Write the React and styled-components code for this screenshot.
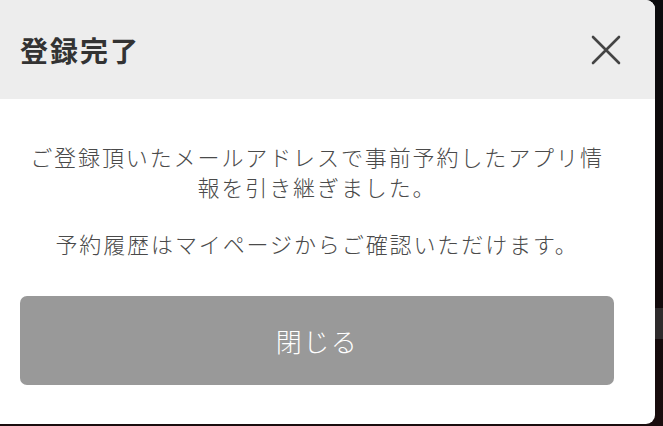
import React from 'react'
import styled, { createGlobalStyle } from 'styled-components'

const GlobalStyle = createGlobalStyle`
  html, body {
    margin: 0;
    padding: 0;
    background: #0d0b0c;
    font-family: "Noto Sans CJK JP", "Noto Sans", sans-serif;
  }
`

const Screen = styled.div`
  display: flex;
  width: 663px;
  height: 426px;
  overflow: hidden;
  background: linear-gradient(180deg, #0b0b0d 0%, #120a0b 70%, #1a0d0e 100%);
`

const Modal = styled.div`
  display: flex;
  flex-direction: column;
  width: 655px;
  height: 424px;
  background: #fff;
  border-radius: 0 9px 9px 0;
  overflow: hidden;
`

const Header = styled.div`
  display: flex;
  align-items: center;
  justify-content: space-between;
  height: 99px;
  padding: 0 34px 0 20px;
  background: #ededed;
`

const Title = styled.h1`
  margin: 0;
  font-size: 28px;
  font-weight: 700;
  letter-spacing: 2px;
  color: #333;
`

const CloseButton = styled.button`
  display: flex;
  padding: 0;
  border: 0;
  background: none;
  cursor: pointer;
`

const Body = styled.div`
  display: flex;
  flex-direction: column;
  align-items: center;
  padding: 42px 41px 0 20px;
`

const Message = styled.p`
  margin: 0 0 ${({ gap }) => gap}px;
  font-size: 22px;
  font-weight: 300;
  line-height: 30px;
  letter-spacing: 1.9px;
  text-align: center;
  color: #4a4a4a;
`

const CloseAction = styled.button`
  align-self: stretch;
  height: 89px;
  margin-top: 8px;
  border: 0;
  border-radius: 7px;
  background: #999;
  font-family: inherit;
  font-size: 26px;
  font-weight: 300;
  letter-spacing: 1.5px;
  color: #fff;
  cursor: pointer;
`

const Edge = styled.div`
  flex: 1;
  display: flex;
  flex-direction: column;
  padding-top: 308px;
`

const EdgeBar = styled.div`
  height: 31px;
  background: #2e2b2c;
`

function CloseIcon() {
  return (
    <svg width="30" height="30" viewBox="0 0 30 30">
      <path d="M2 2 L28 28 M28 2 L2 28" stroke="#444" strokeWidth="2.6" strokeLinecap="round" />
    </svg>
  )
}

function App() {
  return (
    <Screen>
      <GlobalStyle />
      <Modal>
        <Header>
          <Title>登録完了</Title>
          <CloseButton aria-label="閉じる">
            <CloseIcon />
          </CloseButton>
        </Header>
        <Body>
          <Message gap={27}>
            ご登録頂いたメールアドレスで事前予約したアプリ情
            <br />
            報を引き継ぎました。
          </Message>
          <Message gap={30}>予約履歴はマイページからご確認いただけます。</Message>
          <CloseAction>閉じる</CloseAction>
        </Body>
      </Modal>
      <Edge>
        <EdgeBar />
      </Edge>
    </Screen>
  )
}

export default App
